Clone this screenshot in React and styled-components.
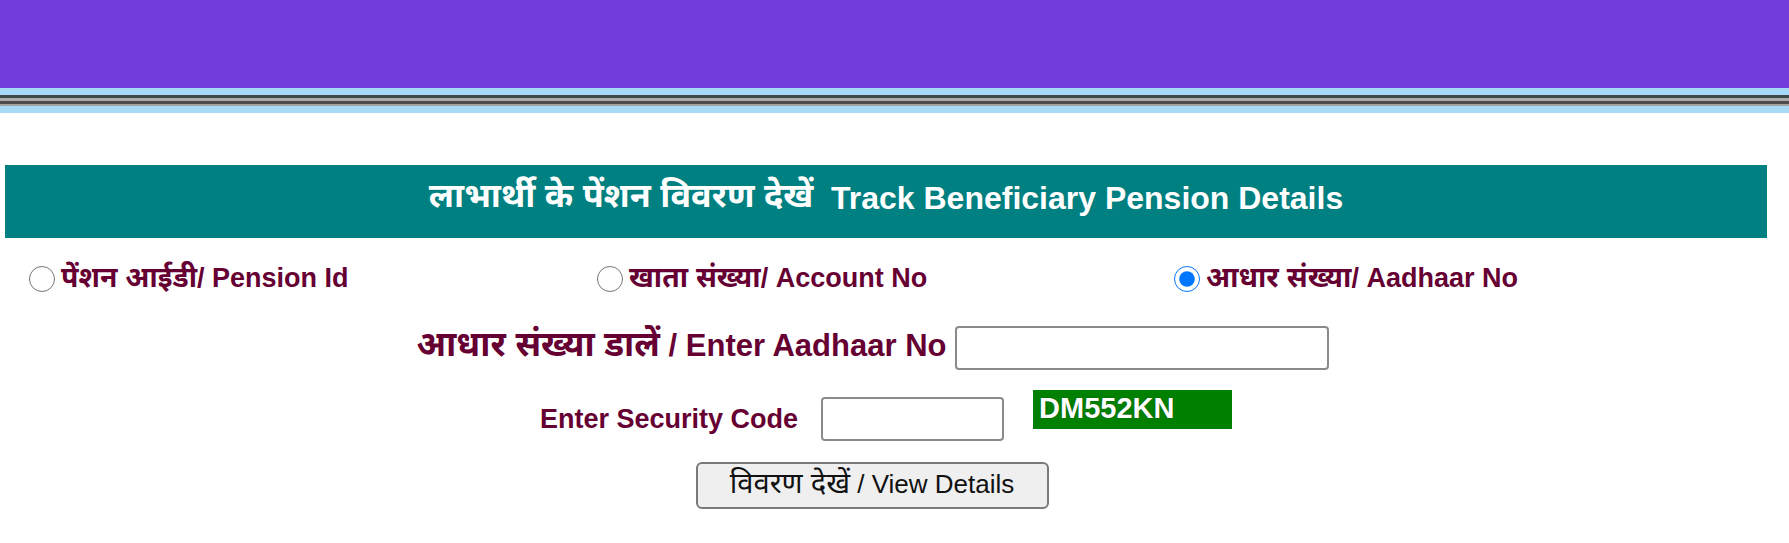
import React, { useState } from "react";
import styled, { createGlobalStyle } from "styled-components";

const GlobalStyle = createGlobalStyle`
  body {
    margin: 0;
    background: #ffffff;
    font-family: "Liberation Sans", "Noto Sans Devanagari", "Noto Sans", Arial, sans-serif;
  }
`;

const TopBar = styled.div`
  height: 88px;
  background: #713bd9;
`;

const Stripe = styled.div`
  height: ${(p) => p.h}px;
  background: ${(p) => p.color};
`;

const Page = styled.div`
  width: 1762px;
  margin: 52px 0 0 5px;
`;

const TitleBar = styled.div`
  height: 73px;
  background: #008080;
  color: #ffffff;
  display: flex;
  align-items: center;
  justify-content: center;
  font-size: 32px;
  font-weight: bold;
  padding-bottom: 7px;
  box-sizing: border-box;
  white-space: pre;
`;

// Devanagari part, the reference font draws it a little larger than Latin
const Hi = styled.span`
  font-size: ${(p) => p.scale || 1.06}em;
`;

const RadioRow = styled.div`
  display: grid;
  grid-template-columns: 568px 577px 1fr;
  padding-left: 24px;
  margin-top: 23px;
  height: 28px;
`;

const RadioLabel = styled.label`
  display: flex;
  align-items: center;
  gap: 6px;
  color: #660033;
  font-size: 27px;
  font-weight: bold;
  cursor: pointer;

  input {
    width: 26px;
    height: 26px;
    margin: 0 0 2px 0;
  }
`;

const FormRow = styled.div`
  display: flex;
  align-items: center;
  justify-content: center;
  gap: ${(p) => p.gap || 9}px;
  margin-top: ${(p) => p.top}px;
  padding-right: ${(p) => p.shift || 0}px;
`;

const Label = styled.span`
  color: #660033;
  font-weight: bold;
  font-size: ${(p) => p.size || 27}px;
  white-space: pre;
`;

const TextBox = styled.input`
  width: ${(p) => p.w}px;
  height: 44px;
  box-sizing: border-box;
  border: 2px solid #8a8a8a;
  border-radius: 4px;
  font-size: 22px;
  padding: 0 8px;
  outline: none;
`;

const Captcha = styled.div`
  width: 199px;
  height: 39px;
  align-self: flex-start;
  margin-top: -7px;
  margin-left: 6px;
  background: #008000;
  color: #ffffff;
  font-weight: bold;
  font-size: 29px;
  line-height: 36px;
  padding-left: 6px;
  box-sizing: border-box;
  text-shadow: 0 0 1px #1a3a1a;
  user-select: none;
`;

const ViewButton = styled.button`
  width: 353px;
  height: 47px;
  background: #efefef;
  border: 2px solid #7a7a7a;
  border-radius: 6px;
  font-family: "Liberation Sans", "Noto Sans Devanagari", "Noto Sans", Arial, sans-serif;
  font-size: 26px;
  color: #111111;
  cursor: pointer;
  white-space: pre;
`;

const options = [
  { id: "pension", hi: "पेंशन आईडी", en: "/ Pension Id" },
  { id: "account", hi: "खाता संख्या", en: "/ Account No" },
  { id: "aadhaar", hi: "आधार संख्या", en: "/ Aadhaar No" },
];

const App = () => {
  const [mode, setMode] = useState("aadhaar");

  return (
    <>
      <GlobalStyle />
      <TopBar />
      <Stripe h={7} color="#a6dbf7" />
      <Stripe h={3} color="#3d4b4b" />
      <Stripe h={3} color="#ababab" />
      <Stripe h={3} color="#4d4d4d" />
      <Stripe h={2} color="#a3a3a3" />
      <Stripe h={7} color="#a6dbf7" />

      <Page>
        <TitleBar>
          <Hi scale={1.07}>लाभार्थी के पेंशन विवरण देखें</Hi>
          {"  Track Beneficiary Pension Details"}
        </TitleBar>

        <RadioRow>
          {options.map((o) => (
            <RadioLabel key={o.id}>
              <input
                type="radio"
                name="searchBy"
                checked={mode === o.id}
                onChange={() => setMode(o.id)}
              />
              <span>
                <Hi scale={1.05}>{o.hi}</Hi>
                {o.en}
              </span>
            </RadioLabel>
          ))}
        </RadioRow>

        <FormRow top={36} shift={26}>
          <Label size={31}>
            <Hi scale={1.12}>आधार संख्या डालें</Hi>
            {" / Enter Aadhaar No"}
          </Label>
          <TextBox w={374} type="text" />
        </FormRow>

        <FormRow top={27} gap={23}>
          <Label>Enter Security Code</Label>
          <TextBox w={183} type="text" />
          <Captcha>DM552KN</Captcha>
        </FormRow>

        <FormRow top={21} shift={28}>
          <ViewButton type="button">
            <Hi scale={1.12}>विवरण देखें</Hi>
            {" / View Details"}
          </ViewButton>
        </FormRow>
      </Page>
    </>
  );
};

export default App;
